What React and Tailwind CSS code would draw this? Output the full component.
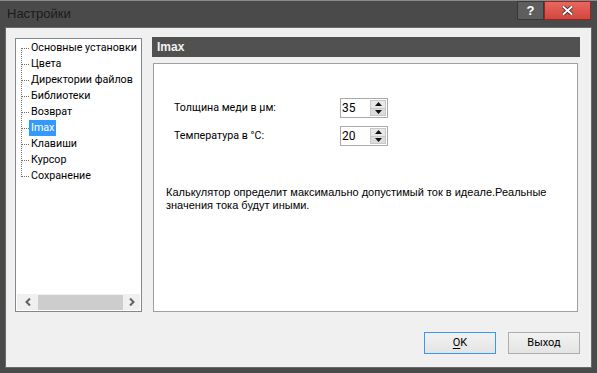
import React from "react";

const items = [
  "Основные установки",
  "Цвета",
  "Директории файлов",
  "Библиотеки",
  "Возврат",
  "Imax",
  "Клавиши",
  "Курсор",
  "Сохранение",
];

const ui = { fontFamily: 'Roboto, "Liberation Sans", Arial, sans-serif' };

function Spinner({ value }) {
  return (
    <div className="flex h-[20px] w-[48px] border border-[#a9a9a9] bg-white">
      <div className="flex-1 pl-[1px] text-[12px] leading-[18px] text-black" style={ui}>{value}</div>
      <div className="my-[1px] mr-[1px] flex w-[16px] flex-col">
        <div className="flex flex-1 items-center justify-center border border-[#c8c8c8] bg-[#e8e8e8]">
          <svg width="7" height="4" viewBox="0 0 7 4"><path d="M0 4 L3.5 0 L7 4 Z" fill="#111" /></svg>
        </div>
        <div className="flex flex-1 items-center justify-center border border-t-0 border-[#c8c8c8] bg-[#dcdcdc]">
          <svg width="7" height="4" viewBox="0 0 7 4"><path d="M0 0 L7 0 L3.5 4 Z" fill="#111" /></svg>
        </div>
      </div>
    </div>
  );
}

export default function App() {
  return (
    <div
      className="flex h-[373px] w-[597px] flex-col border-t border-[#8a8a8a] bg-[#4a4a4a]"
      style={{ fontFamily: '"Liberation Sans", Arial, sans-serif' }}
    >
      {/* Title bar */}
      <div className="flex h-[26px] items-start">
        <div className="pl-[7px] pt-[5px] text-[13px] leading-[15px] text-[#1a1a1a]">Настройки</div>
        <div className="ml-auto mr-[6px] flex h-[19px]">
          <div className="flex w-[27px] items-center justify-center border border-[#383838] bg-[#5e5e5e] text-[13px] font-bold leading-none text-white">
            ?
          </div>
          <div className="flex w-[47px] items-center justify-center border border-[#8b2a24] bg-gradient-to-b from-[#e9675e] to-[#d2463d]">
            <svg width="11" height="9" viewBox="0 0 11 9">
              <path d="M1.5 1 L9.5 8 M9.5 1 L1.5 8" stroke="#2a2a2a" strokeWidth="3.6" strokeLinecap="square" />
              <path d="M1.5 1 L9.5 8 M9.5 1 L1.5 8" stroke="#ffffff" strokeWidth="2" strokeLinecap="square" />
            </svg>
          </div>
        </div>
      </div>

      {/* Client */}
      <div className="mx-[5px] mb-[5px] flex flex-1 flex-col border border-[#6a6a6a] bg-[#f0f0f0] px-[9px] pt-[9px]">
        <div className="flex gap-[10px]">
          {/* Tree */}
          <div className="mt-[1px] flex h-[274px] w-[127px] flex-col overflow-hidden border border-[#828790] bg-white">
            <div className="relative flex-1 pt-[1px]">
              <div className="absolute left-[5px] top-[9px] h-[129px] border-l border-dotted border-[#6f6f6f]" />
              {items.map((t) => (
                <div key={t} className="flex h-[16px] items-center">
                  <div className="ml-[6px] w-[7px] shrink-0 border-t border-dotted border-[#6f6f6f]" />
                  <div
                    className={
                      "whitespace-nowrap px-[2px] text-[10.7px] leading-[16px] " +
                      (t === "Imax" ? "bg-[#3399ff] text-white" : "text-black")
                    }
                    style={ui}
                  >
                    {t}
                  </div>
                </div>
              ))}
            </div>
            <div className="mx-[1px] mb-[1px] flex h-[16px] shrink-0 items-center bg-[#f0f0f0]">
              <div className="flex w-[21px] items-center justify-center">
                <svg width="6" height="8" viewBox="0 0 6 8"><path d="M5 0.5 L1.5 4 L5 7.5" stroke="#606060" strokeWidth="2" fill="none" /></svg>
              </div>
              <div className="h-[15px] w-[85px] bg-[#cdcdcd]" />
              <div className="flex flex-1 items-center justify-center">
                <svg width="6" height="8" viewBox="0 0 6 8"><path d="M1 0.5 L4.5 4 L1 7.5" stroke="#606060" strokeWidth="2" fill="none" /></svg>
              </div>
            </div>
          </div>

          {/* Right panel */}
          <div className="flex w-[428px] flex-col">
            <div className="flex h-[20px] items-center bg-[#515151] pl-[5px] text-[12px] font-bold text-[#f2f2f2]">Imax</div>
            <div className="mt-[6px] ml-[1px] mr-[2px] flex h-[249px] flex-col border border-[#a0a0a0] bg-white pl-[12px] pt-[34px]">
              <div className="flex flex-col gap-[8px]">
                <div className="flex items-center">
                  <div className="w-[174px] pl-[8px] text-[10.7px] text-black" style={ui}>Толщина меди в μм:</div>
                  <Spinner value="35" />
                </div>
                <div className="flex items-center">
                  <div className="w-[174px] pl-[8px] text-[10.7px] text-black" style={ui}>Температура в °C:</div>
                  <Spinner value="20" />
                </div>
              </div>
              <div className="mt-[40px] text-[11px] leading-[13px] text-black">
                Калькулятор определит максимально допустимый ток в идеале.Реальные
                <br />
                значения тока будут иными.
              </div>
            </div>
          </div>
        </div>

        {/* Buttons */}
        <div className="mt-[20px] flex justify-end gap-[12px] pr-[2px]">
          <div className="flex h-[22px] w-[72px] items-center justify-center border border-[#3399ff] bg-gradient-to-b from-[#f2f2f2] to-[#e4e4e4] text-[11px] text-black" style={ui}>
            <span className="underline underline-offset-2">O</span>K
          </div>
          <div className="flex h-[22px] w-[72px] items-center justify-center border border-[#adadad] bg-gradient-to-b from-[#f2f2f2] to-[#e4e4e4] text-[11px] text-black" style={ui}>
            Выход
          </div>
        </div>
      </div>
    </div>
  );
}
